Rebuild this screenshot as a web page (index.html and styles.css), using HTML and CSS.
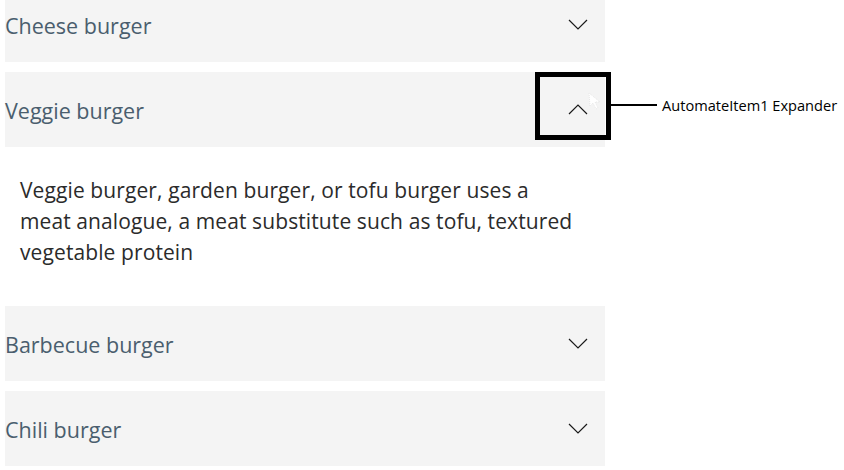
FILE: index.html
```html
<!DOCTYPE html>
<html>
<head>
<meta charset="utf-8">
<link rel="stylesheet" href="styles.css">
</head>
<body>
<div class="stage">
  <div class="accordion">
    <div class="item">
      <div class="header">
        <span class="title">Cheese burger</span>
        <svg class="chev" width="20" height="11" viewBox="0 0 20 11"><polyline points="1,1 10,10 19,1" fill="none" stroke="#1a1a1a" stroke-width="1.2"/></svg>
      </div>
    </div>
    <div class="item">
      <div class="header">
        <span class="title">Veggie burger</span>
        <svg class="chev" width="20" height="11" viewBox="0 0 20 11"><polyline points="1,10 10,1 19,10" fill="none" stroke="#1a1a1a" stroke-width="1.2"/></svg>
      </div>
      <div class="content">Veggie burger, garden burger, or tofu burger uses a meat analogue, a meat substitute such as tofu, textured vegetable protein</div>
    </div>
    <div class="item">
      <div class="header">
        <span class="title">Barbecue burger</span>
        <svg class="chev" width="20" height="11" viewBox="0 0 20 11"><polyline points="1,1 10,10 19,1" fill="none" stroke="#1a1a1a" stroke-width="1.2"/></svg>
      </div>
    </div>
    <div class="item">
      <div class="header">
        <span class="title">Chili burger</span>
        <svg class="chev" width="20" height="11" viewBox="0 0 20 11"><polyline points="1,1 10,10 19,1" fill="none" stroke="#1a1a1a" stroke-width="1.2"/></svg>
      </div>
    </div>
  </div>
  <svg class="cursor" width="18" height="20" viewBox="0 0 18 20"><polygon points="3,1 4,14 7,11 10,17 12,16 9,10 14,10" fill="#ffffff" stroke="#e2e2e2" stroke-width="0.8" stroke-dasharray="1 1"/></svg>
  <div class="highlight"></div>
  <div class="leader"></div>
  <div class="label">AutomateItem1 Expander</div>
</div>
</body>
</html>
```
FILE: styles.css
```css
html, body {
  margin: 0;
  padding: 0;
  background: #ffffff;
  overflow: hidden;
}
.stage {
  position: relative;
  width: 844px;
  height: 470px;
  overflow: hidden;
  font-family: "Open Sans", "Noto Sans", sans-serif;
}
.accordion {
  margin-top: -13px;
  margin-left: 5px;
  width: 600px;
  display: flex;
  flex-direction: column;
  gap: 10px;
}
.header {
  height: 75px;
  background: #f4f4f4;
  display: flex;
  align-items: center;
  justify-content: space-between;
  padding-right: 17px;
  padding-top: 2px;
  box-sizing: border-box;
}
.title {
  font-size: 21.5px;
  color: #4a5e6e;
}
.chev {
  display: block;
  margin-top: -2px;
}
.content {
  padding: 28px 27px 28px 15px;
  font-size: 21px;
  line-height: 31px;
  color: #2b2b2b;
  letter-spacing: 0.1px;
}
.cursor {
  position: absolute;
  left: 586px;
  top: 92px;
}
.highlight {
  position: absolute;
  left: 535px;
  top: 72px;
  width: 76px;
  height: 68px;
  box-sizing: border-box;
  border: 5px solid #000;
}
.leader {
  position: absolute;
  left: 606px;
  top: 104px;
  width: 51px;
  height: 2px;
  background: #000;
}
.label {
  position: absolute;
  left: 662px;
  top: 95px;
  font-size: 14.6px;
  line-height: 20px;
  color: #000;
}
```
